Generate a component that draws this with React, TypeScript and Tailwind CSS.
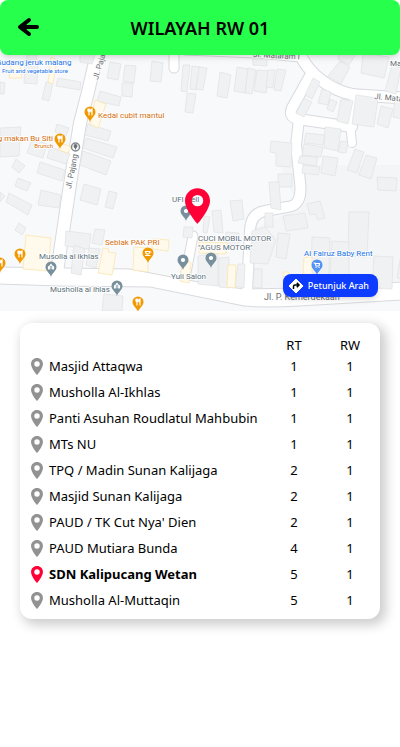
import React from "react";

type Place = { name: string; rt: number; rw: number; active?: boolean };

const places: Place[] = [
  { name: "Masjid Attaqwa", rt: 1, rw: 1 },
  { name: "Musholla Al-Ikhlas", rt: 1, rw: 1 },
  { name: "Panti Asuhan Roudlatul Mahbubin", rt: 1, rw: 1 },
  { name: "MTs NU", rt: 1, rw: 1 },
  { name: "TPQ / Madin Sunan Kalijaga", rt: 2, rw: 1 },
  { name: "Masjid Sunan Kalijaga", rt: 2, rw: 1 },
  { name: "PAUD / TK Cut Nya' Dien", rt: 2, rw: 1 },
  { name: "PAUD Mutiara Bunda", rt: 4, rw: 1 },
  { name: "SDN Kalipucang Wetan", rt: 5, rw: 1, active: true },
  { name: "Musholla Al-Muttaqin", rt: 5, rw: 1 },
];

const pinPath =
  "M12 2C8.1 2 5 5.1 5 9c0 5.2 7 13 7 13s7-7.800 7-13c0-3.900-3.100-7-7-7zm0 10.200a3.200 3.200 0 1 1 0-6.400 3.200 3.200 0 0 1 0 6.400z";

function Pin({ className }: { className: string }) {
  return (
    <svg viewBox="5 2 14 20" className={className} fill="currentColor" aria-hidden="true">
      <path d={pinPath} />
    </svg>
  );
}

// Building footprints
const buildings = [
  "27,55 37,55 34,76 24,74",
  "25,60 38,60 37,84 24,83",
  "80,51 95,55 92,64 80,62",
  "58,78 81,82 80,90 56,86",
  "46,82 53,83 49,101 42,99",
  "0,82 5,83 4,94 0,94",
  "110,62 121,64 118,80 107,78",
  "125,65 136,66 134,83 123,81",
  "122,83 133,83 132,97 122,96",
  "100,91 121,97 119,106 97,101",
  "88,124 111,131 108,141 85,135",
  "86,138 117,147 113,158 83,148",
  "83,151 111,161 106,175 80,165",
  "0,128 21,127 19,156 0,157",
  "57,124 69,128 66,136 55,132",
  "32,139 47,144 43,158 27,153",
  "50,147 70,154 66,164 47,158",
  "16,159 25,166 19,173 12,167",
  "40,162 65,170 62,181 37,173",
  "18,178 31,183 27,191 15,186",
  "9,193 32,205 28,215 6,202",
  "41,190 61,195 59,208 38,205",
  "19,223 26,228 22,235 15,230",
  "0,192 5,196 0,202",
  "84,184 101,189 97,205 80,200",
  "109,191 117,193 113,209 105,207",
  "152,61 163,63 161,82 150,81",
  "183,65 190,65 187,92 181,91",
  "192,66 200,67 196,90 190,89",
  "199,67 207,68 203,90 196,89",
  "187,93 196,94 193,113 185,112",
  "220,72 231,75 227,98 217,96",
  "237,67 249,69 245,93 234,91",
  "248,68 256,70 252,94 245,93",
  "257,70 270,71 266,93 254,91",
  "253,59 267,59 267,66 253,65",
  "268,70 275,70 273,88 266,87",
  "277,69 286,70 281,91 274,90",
  "340,61 350,67 341,84 328,76",
  "339,50 356,54 349,65 338,59",
  "363,53 389,57 384,78 361,73",
  "392,65 401,68 396,94 385,91",
  "313,78 320,82 312,99 305,95",
  "322,89 331,92 328,105 318,103",
  "330,99 337,102 333,112 327,109",
  "304,98 312,102 304,117 296,113",
  "341,99 353,101 348,124 337,121",
  "356,95 378,98 374,127 352,124",
  "381,106 393,109 388,128 377,124",
  "395,98 404,101 402,119 393,117",
  "306,133 325,135 323,145 304,143",
  "304,144 323,147 321,157 302,155",
  "300,156 318,157 316,166 298,163",
  "325,127 341,129 338,151 324,148",
  "341,141 348,142 346,153 338,152",
  "303,165 320,167 318,175 302,173",
  "323,156 338,158 335,176 321,173",
  "355,149 364,152 357,173 347,170",
  "366,155 377,158 371,179 359,175",
  "271,141 292,143 291,167 276,166 276,153 270,152",
  "278,174 292,174 292,187 278,187",
  "377,177 397,178 396,191 378,190",
  "269,182 279,182 281,210 271,208",
  "307,204 320,201 325,218 318,220 315,214 310,215",
  "283,216 305,213 308,228 286,231",
  "265,213 273,213 273,227 265,227",
  "278,233 290,234 286,259 276,257",
  "349,212 369,212 367,257 348,256",
  "312,237 330,238 329,275 311,274",
  "332,241 349,242 349,276 330,275",
  "374,256 393,257 392,289 372,288",
  "401,254 405,255 403,279 397,278",
  "66,231 91,234 89,249 65,246",
  "95,229 105,230 102,245 92,243",
  "74,245 85,249 81,275 71,273",
  "89,248 100,249 96,268 86,265",
  "104,294 123,296 122,311 102,311",
  "230,201 242,200 244,219 233,221",
  "204,216 210,217 207,233 203,232",
  "212,211 221,210 223,233 214,232",
  "184,227 193,227 192,238 183,237",
  "226,232 239,233 239,245 226,244",
  "198,256 218,253 218,286 198,284",
  "219,258 229,257 229,288 219,287",
  "238,264 245,264 244,288 235,286",
  "254,269 262,269 262,288 253,287",
  "252,231 265,227 276,240 268,264 250,263",
];

// Shops and food places
const shops = [
  "11,62 20,62 22,78 9,78",
  "51,57 57,60 53,84 48,82",
  "95,100 106,104 98,128 90,124",
  "61,143 71,147 68,153 58,150",
  "26,235 51,238 48,271 23,269",
  "103,248 109,249 108,252 116,253 112,275 98,273",
  "134,247 148,248 148,272 133,270",
  "152,239 169,240 168,251 152,249",
  "182,261 191,262 189,283 180,281",
  "199,242 227,243 226,254 199,253",
  "228,265 236,265 235,288 227,287",
  "304,257 312,257 312,275 303,274",
  "283,272 289,272 288,282 283,281",
];

const roads: { d: string; w: number }[] = [
  { d: "M99 45L88 92L80 123L71 178L57 272", w: 12 },
  { d: "M174 45V68", w: 9 },
  { d: "M185 51L258 54L300 58", w: 7 },
  { d: "M297 48Q304 65 315 75Q335 93 358 95L405 98", w: 11 },
  { d: "M311 74L292 108Q288 117 298 119L352 127", w: 10 },
  { d: "M354 96L350 123L352 143", w: 8 },
  { d: "M299 119L296 145L300 182Q303 206 287 207L265 211Q251 213 250 230L247 292", w: 10 },
  { d: "M193 236L185 278", w: 9 },
];

const mainRoad =
  "M-2 267L130 269L187 280L243 289L300 288L402 282V300L300 306Q262 308 244 306L150 287L60 286L-2 284Z";

function Poi({ x, y, color, children }: { x: number; y: number; color: string; children?: React.ReactNode }) {
  return (
    <g transform={`translate(${x} ${y})`}>
      <path d="M0 10C-1 6-5.500 4-5.500 0a5.500 5.500 0 1 1 11 0C5.500 4 1 6 0 10Z" fill={color} />
      <g stroke="#fff" strokeWidth="1.200" fill="none" strokeLinecap="round">
        {children}
      </g>
    </g>
  );
}

const Fork = () => <path d="M-2-3V-1Q-1 1 0-1V-3M-1-3V3M2 3V-3Q.8-2 1.200 0H2" />;
const Dot = () => <circle r="1.500" fill="#fff" />;
const Mosque = () => <path d="M-2.500 2V-.5M2.500 2V-.5M-1.200 2V-1L0-2.500L1.200-1V2" />;

function AreaMap() {
  return (
    <svg
      viewBox="0 47 400 264"
      preserveAspectRatio="xMidYMid slice"
      className="block aspect-[400/264] w-full font-[Roboto,sans-serif]"
      role="img"
      aria-label="Peta wilayah RW 01"
    >
      <rect x="0" y="47" width="400" height="264" fill="#f8f9fb" />
      <path d="M280 165H400V284L250 288L252 230L298 207Z" fill="#f4f5f7" />
      <g fill="none" stroke="#d8dade">
        {roads.map((r) => (
          <path key={r.d} d={r.d} strokeWidth={r.w + 2} strokeLinecap="round" strokeLinejoin="round" />
        ))}
      </g>
      <path d={mainRoad} fill="#fff" stroke="#d8dade" />
      <g fill="none" stroke="#fff">
        {roads.map((r) => (
          <path key={r.d} d={r.d} strokeWidth={r.w} strokeLinecap="round" strokeLinejoin="round" />
        ))}
      </g>
      <g fill="#f0f1f3" stroke="#dfe1e3" strokeWidth="0.700">
        {buildings.map((p) => (
          <polygon key={p} points={p} />
        ))}
      </g>
      <g fill="#fffaeb" stroke="#fbe5b0" strokeWidth="0.800">
        {shops.map((p) => (
          <polygon key={p} points={p} />
        ))}
      </g>

      <g fontSize="8" fill="#6b6e72" stroke="#fff" strokeWidth="2" paintOrder="stroke">
        <text transform="translate(98 80) rotate(-73)">Jl. Pajang</text>
        <text transform="translate(71 189) rotate(-79)">Jl. Pajang</text>
        <text transform="translate(253 57) rotate(3)">Jl. Mataram I</text>
        <text transform="translate(374 99) rotate(5)">Jl. Mataram</text>
        <text x="264" y="300" fontSize="9">Jl. P. Kemerdekaan</text>
      </g>

      <Poi x={90} y={112} color="#f29900"><Fork /></Poi>
      <Poi x={60} y={139} color="#f29900"><Fork /></Poi>
      <Poi x={20} y={254} color="#f29900"><Fork /></Poi>
      <Poi x={0} y={263} color="#f29900"><Fork /></Poi>
      <Poi x={138} y={302} color="#f29900"><Fork /></Poi>
      <Poi x={148} y={253} color="#f29900"><path d="M-2.500-1.500H1.500V0Q0 2-2 .5ZM2-1H3M-2.500 2.500H2" /></Poi>
      <Poi x={51} y={267} color="#78909c"><Mosque /></Poi>
      <Poi x={117} y={286} color="#78909c"><Mosque /></Poi>
      <Poi x={186} y={211} color="#78909c"><Dot /></Poi>
      <Poi x={183} y={260} color="#78909c"><Dot /></Poi>
      <Poi x={211} y={258} color="#78909c"><Dot /></Poi>
      <Poi x={317} y={265} color="#5491f5"><path d="M-3-2H-2L-1 1H2L2.500-1.500H-1.500M-1 2.500H-.8M2 2.500H2.200" /></Poi>
      <circle cx="75.500" cy="147" r="4" fill="#fff" stroke="#85888b" strokeWidth="1.500" />
      <path d="M75.500 150C75 148 73.500 147.500 73.500 146a2 2 0 0 1 4 0C77.500 147.500 76 148 75.500 150Z" fill="#6f7275" />

      <g fontSize="8" stroke="#fff" strokeWidth="1.500" paintOrder="stroke">
        <g fill="#1a73e8">
          <text x="-4" y="65">Gudang jeruk malang</text>
          <text x="2" y="73" fontSize="6">Fruit and vegetable store</text>
          <text x="304" y="256">Al Fairuz Baby Rent</text>
        </g>
        <g fill="#d56e0c">
          <text x="98" y="118">Kedai cubit mantul</text>
          <text x="53" y="141" textAnchor="end">Warung makan Bu Siti</text>
          <text x="53" y="148" fontSize="6" textAnchor="end">Brunch</text>
          <text x="105" y="245">Seblak PAK PRI</text>
        </g>
        <g fill="#5c6f79">
          <text x="390" y="66">Masjid</text>
          <text x="39" y="259">Musolla al ikhlas</text>
          <text x="50" y="292">Musholla al ihlas</text>
          <text x="172" y="202">UFI Cell</text>
          <text x="171" y="279">Yuli Salon</text>
          <text x="198" y="241">CUCI MOBIL MOTOR</text>
          <text x="198" y="250">"AGUS MOTOR"</text>
        </g>
      </g>
    </svg>
  );
}

export default function App() {
  return (
    <main className="min-h-screen bg-white font-['Noto_Sans','Open_Sans',sans-serif] text-black">
      <header className="relative z-10 flex h-[55px] items-center justify-center rounded-lg bg-[#26ff4b] shadow-md">
        <button type="button" aria-label="Kembali" className="absolute left-4 top-4 h-6 w-6">
          <svg viewBox="0 0 24 24" className="h-6 w-6" fill="none" stroke="currentColor" strokeWidth="4" strokeLinecap="round" strokeLinejoin="round" aria-hidden="true">
            <path d="M21 11H5M13 4L4 11L13 18" />
            <path d="M5 11L10 7.500V14.500Z" fill="currentColor" strokeWidth="1" />
          </svg>
        </button>
        <h1 className="text-lg font-semibold">WILAYAH RW 01</h1>
      </header>

      <section className="relative -mt-2">
        <AreaMap />
        <Pin className="absolute left-1/2 top-[141px] h-9 w-[25px] -translate-x-[15px] text-[#ff0037]" />
        <button
          type="button"
          className="absolute bottom-[14px] right-[22px] flex h-[23px] items-center gap-1 rounded-lg bg-[#0d3bff] pl-[5px] pr-[9px] text-[9px] font-medium text-white shadow-md"
        >
          <svg viewBox="0 0 16 16" className="h-4 w-4" aria-hidden="true">
            <path d="M8 1L15 8L8 15L1 8Z" fill="#fff" stroke="#fff" strokeWidth="1" strokeLinejoin="round" />
            <path d="M5.500 11V8.500Q5.500 7 7 7H10.500M8.800 4.800L11 7L8.800 9.200" fill="none" stroke="#000" strokeWidth="1.500" />
          </svg>
          Petunjuk Arah
        </button>
      </section>

      <section className="mx-5 mt-3 rounded-xl bg-white pb-[6px] pr-[2px] pt-[14px] shadow-[4px_4px_12px_2px_rgba(0,0,0,0.2)]">
        <table className="w-full table-fixed border-collapse text-[13px]">
          <thead>
            <tr className="h-4 leading-4">
              <th aria-label="Tempat" className="p-0" />
              <th scope="col" className="w-14 p-0 font-normal">RT</th>
              <th scope="col" className="w-14 p-0 font-normal">RW</th>
            </tr>
          </thead>
          <tbody>
            {places.map((p) => (
              <tr key={p.name} className="h-[26px] leading-5">
                <td className="p-0 pl-[11px]">
                  <div className="flex items-center gap-[6px] whitespace-nowrap">
                    <Pin className={p.active ? "h-[17px] w-3 shrink-0 text-[#ff0037]" : "h-[17px] w-3 shrink-0 text-[#929292]"} />
                    <span className={p.active ? "font-bold" : "font-normal"}>{p.name}</span>
                  </div>
                </td>
                <td className="p-0 text-center">{p.rt}</td>
                <td className="p-0 text-center">{p.rw}</td>
              </tr>
            ))}
          </tbody>
        </table>
      </section>
    </main>
  );
}
